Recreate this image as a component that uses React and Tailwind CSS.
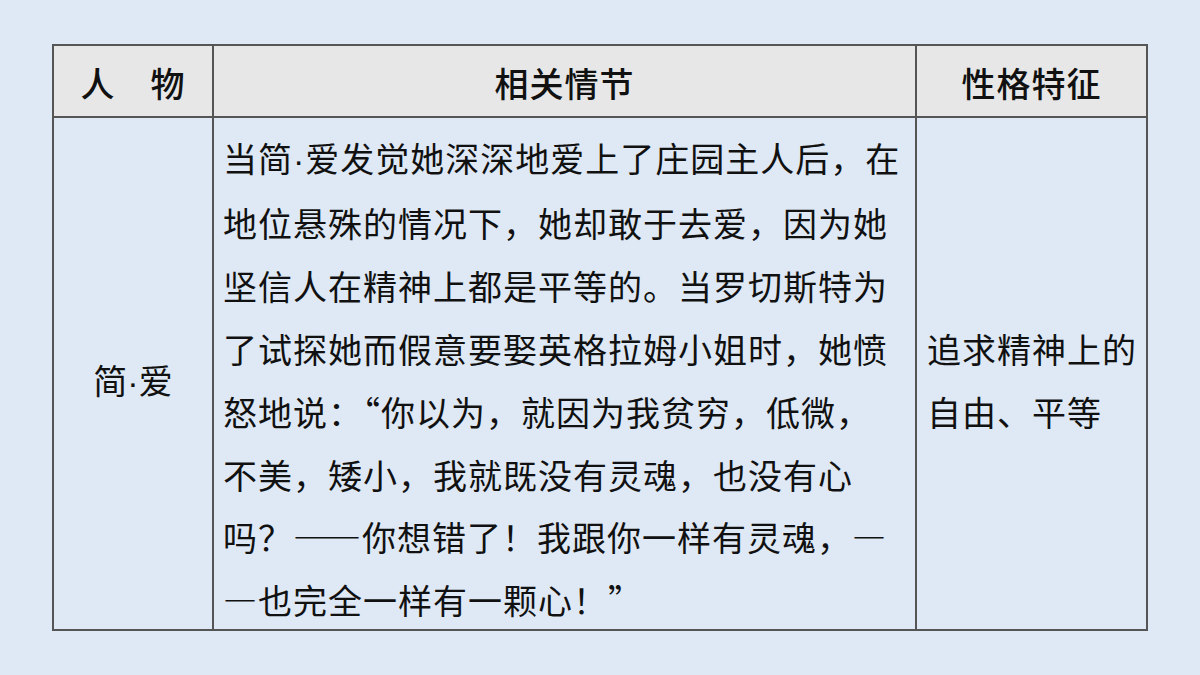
import React from 'react';

const Dot = () => (
  <span className="font-['Liberation_Sans',sans-serif]">·</span>
);

// full-width dashes, as in the slide
const Dash = ({ n = 1 }) => (
  <span className="[font-feature-settings:'fwid'] tracking-[0px] mr-[1px]">{'—'.repeat(n)}</span>
);

const plotLines = [
  <>当简<Dot />爱发觉她深深地爱上了庄园主人后，在</>,
  '地位悬殊的情况下，她却敢于去爱，因为她',
  '坚信人在精神上都是平等的。当罗切斯特为',
  '了试探她而假意要娶英格拉姆小姐时，她愤',
  '怒地说：“你以为，就因为我贫穷，低微，',
  '不美，矮小，我就既没有灵魂，也没有心',
  <>吗？<Dash n={2} />你想错了！我跟你一样有灵魂，<Dash /></>,
  <><Dash />也完全一样有一颗心！”</>,
];

const App = () => {
  return (
    <div className="w-[1200px] h-[675px] bg-[#dfe9f5] pt-[44px] pl-[52px] text-[#111] font-['Noto_Sans_CJK_SC','Noto_Sans',sans-serif]">
      <div className="w-[1096px] border-2 border-[#555] grid grid-cols-[160px_703px_229px]">
        {/* header */}
        <div className="h-[72px] bg-[#e7e7e7] border-r-2 border-b-2 border-[#555] flex items-center justify-center text-[34px] font-medium tracking-[1px] pt-[2px]">
          人　物
        </div>
        <div className="h-[72px] bg-[#e7e7e7] border-r-2 border-b-2 border-[#555] flex items-center justify-center text-[34px] font-medium tracking-[1px] pt-[2px]">
          相关情节
        </div>
        <div className="h-[72px] bg-[#e7e7e7] border-b-2 border-[#555] flex items-center justify-center text-[34px] font-medium tracking-[1px] pt-[2px]">
          性格特征
        </div>

        {/* body */}
        <div className="h-[511px] border-r-2 border-[#555] flex items-center justify-center text-[34px] pt-[14px]">
          <span>简<Dot />爱</span>
        </div>
        <div className="h-[511px] border-r-2 border-[#555] pl-[9px] pt-[9px] text-[34px] leading-[62.9px] tracking-[1px]">
          {plotLines.map((line, i) => (
            <div key={i} className="whitespace-nowrap">{line}</div>
          ))}
        </div>
        <div className="h-[511px] flex flex-col justify-center pl-[10px] pt-[14px] text-[34px] leading-[62.9px] tracking-[1px]">
          <div className="whitespace-nowrap">追求精神上的</div>
          <div className="whitespace-nowrap">自由、平等</div>
        </div>
      </div>
    </div>
  );
};

export default App;
